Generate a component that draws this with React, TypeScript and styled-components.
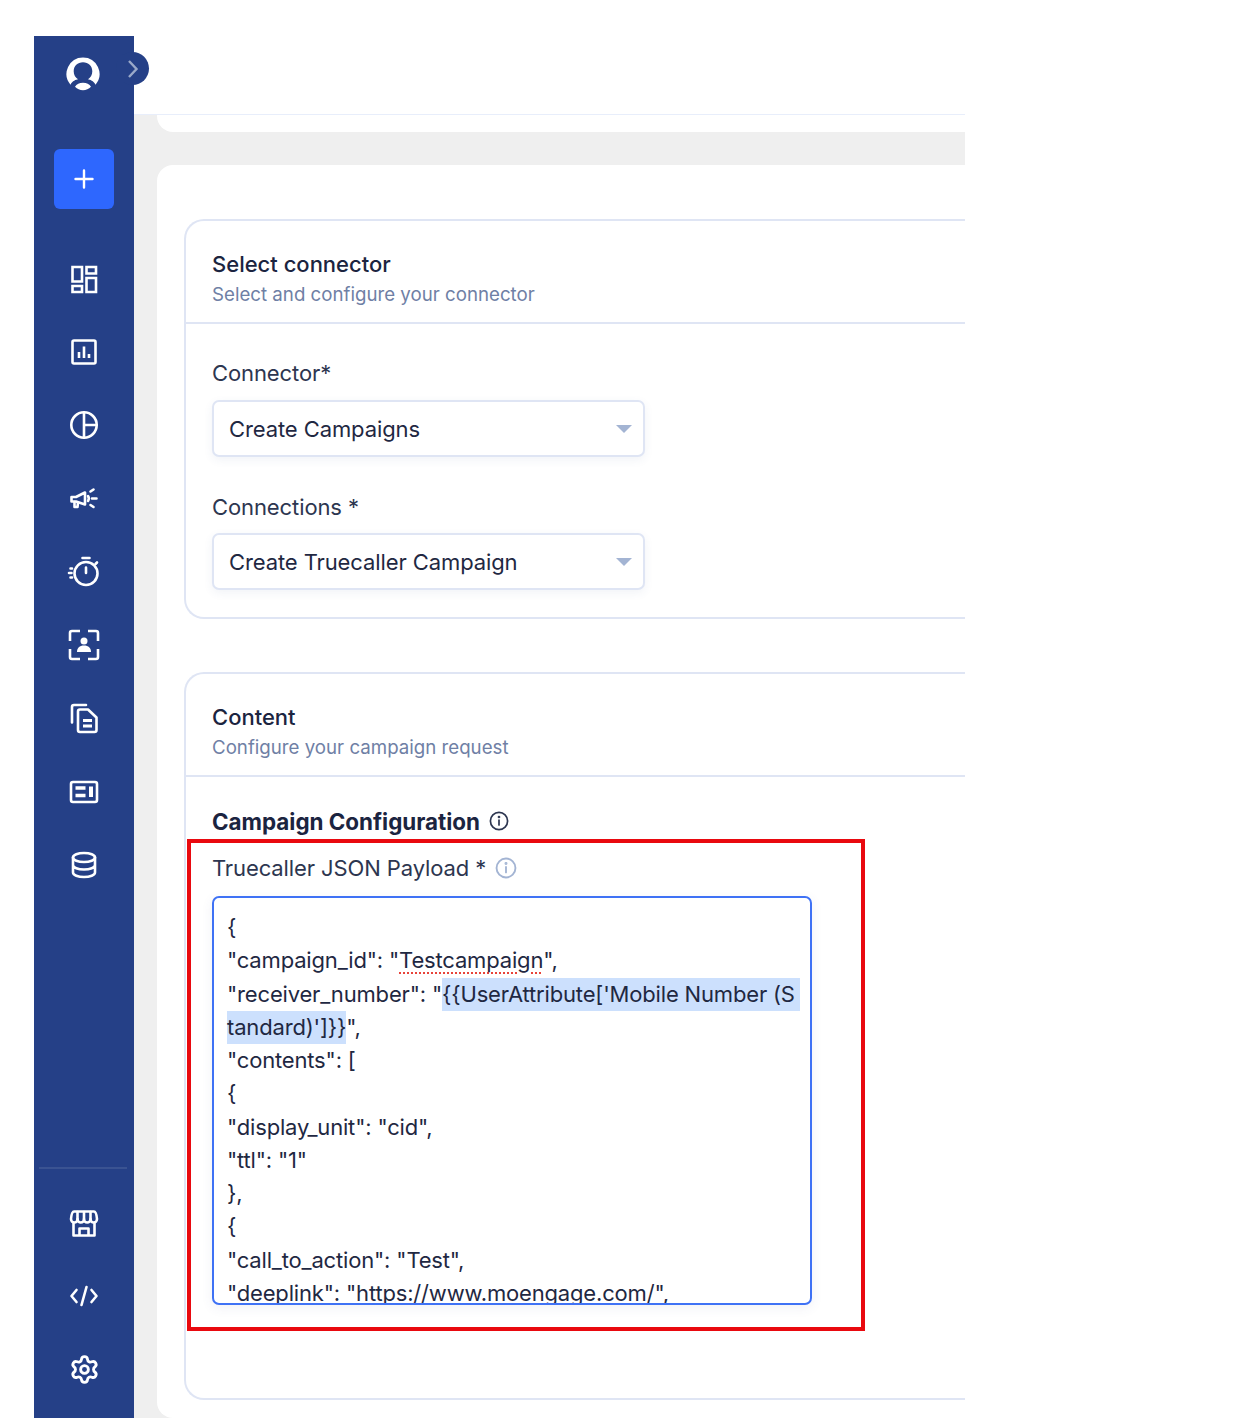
import React from 'react'
import styled, { createGlobalStyle } from 'styled-components'
import { Settings } from 'lucide-react'

const GlobalStyle = createGlobalStyle`
  html, body {
    margin: 0;
    padding: 0;
    background: #fff;
  }
  * {
    box-sizing: border-box;
  }
`

const Page = styled.div`
  padding: 36px 0 4px 34px;
  font-family: Inter, 'Noto Sans', sans-serif;
  color: #1b2440;
`
const Frame = styled.div`
  position: relative;
  display: flex;
  width: 931px;
  height: 1382px;
  overflow: hidden;
`
const Sidebar = styled.aside`
  flex: 0 0 100px;
  display: flex;
  flex-direction: column;
  align-items: center;
  background: #254087;
`
const AvatarSlot = styled.div`
  height: 74px;
  width: 100%;
  padding: 21px 0 0 0;
  display: flex;
  justify-content: center;
  transform: translateX(-1px);
`
const AddButton = styled.button`
  margin-top: 39px;
  width: 60px;
  height: 60px;
  flex: none;
  display: flex;
  align-items: center;
  justify-content: center;
  border: 0;
  padding: 0;
  border-radius: 6px;
  background: #2e67fe;
`
const NavList = styled.nav`
  margin-top: 33px;
  width: 100%;
`
const NavBottom = styled.nav`
  margin-top: auto;
  padding-bottom: 12px;
  width: 100%;
  display: flex;
  flex-direction: column;
  align-items: center;
`
const Divider = styled.div`
  width: 88px;
  height: 2px;
  margin: 0 2px 17px 0;
  background: #3a5392;
`
const NavItem = styled.div`
  height: 73.3px;
  width: 100%;
  display: flex;
  align-items: center;
  justify-content: center;
  color: #fff;
`
const ExpandToggle = styled.button`
  position: absolute;
  left: 82px;
  top: 16px;
  width: 33px;
  height: 33px;
  padding: 0;
  border: 0;
  border-radius: 50%;
  background: #254087;
  display: flex;
  align-items: center;
  justify-content: center;
`
const Main = styled.main`
  flex: 1;
  min-width: 0;
  display: flex;
  flex-direction: column;
  background: #efefef;
  overflow: hidden;
`
const TopBar = styled.header`
  flex: 0 0 79px;
  background: #fff;
  border-bottom: 1px solid #e8eefb;
`
const TopCard = styled.div`
  flex: 0 0 17px;
  margin-left: 23px;
  width: 900px;
  background: #fff;
  border-radius: 0 0 16px 16px;
`
const Card = styled.div`
  flex: 1;
  margin: 33px 0 0 23px;
  width: 900px;
  padding: 54px 0 0 27px;
  background: #fff;
  border-radius: 16px 16px 0 16px;
`
const Section = styled.section<{ $height: number; $gap?: number }>`
  height: ${p => p.$height}px;
  margin-bottom: ${p => p.$gap ?? 0}px;
  border: 2px solid #dfe5f4;
  border-right: 0;
  border-radius: 20px 0 0 20px;
`
const SectionHead = styled.div`
  height: 103px;
  padding: 27px 0 0 26px;
  border-bottom: 2px solid #dfe5f4;
`
const SectionTitle = styled.div`
  font-size: 22px;
  line-height: 32px;
  font-weight: 500;
`
const SectionSub = styled.div`
  font-size: 18.7px;
  line-height: 30px;
  color: #6f80a5;
`
const SectionBody = styled.div`
  padding: 0 0 0 26px;
`
const FieldLabel = styled.label<{ $top: number }>`
  display: flex;
  align-items: center;
  gap: 9px;
  height: 32px;
  margin-top: ${p => p.$top}px;
  font-size: 22px;
  letter-spacing: -0.1px;
  color: #2d3650;
`
const Select = styled.div<{ $top: number }>`
  width: 433px;
  height: 57px;
  margin-top: ${p => p.$top}px;
  padding: 0 11px 0 15px;
  display: flex;
  align-items: center;
  justify-content: space-between;
  font-size: 22px;
  letter-spacing: -0.1px;
  color: #1f2842;
  background: #fff;
  border: 2px solid #dfe5f4;
  border-radius: 7px;
  box-shadow: 0 3px 10px rgba(60, 80, 140, 0.07);
`
const Caret = styled.span`
  width: 0;
  height: 0;
  border-left: 8.5px solid transparent;
  border-right: 8.5px solid transparent;
  border-top: 8px solid #a3b4d3;
`
const GroupTitle = styled.div`
  display: flex;
  align-items: center;
  gap: 9px;
  height: 32px;
  margin-top: 28px;
  font-size: 22.4px;
  font-weight: 700;
  color: #1b2440;
`
const Editor = styled.div`
  width: 600px;
  height: 409px;
  margin-top: 12px;
  padding: 13px 0 0 13px;
  overflow: hidden;
  font-size: 22px;
  letter-spacing: -0.17px;
  line-height: 33.25px;
  color: #1f2842;
  background: #fff;
  border: 2px solid #3f72f5;
  border-radius: 7px;
  box-shadow: 0 3px 12px rgba(60, 80, 140, 0.08);
`
const CodeLine = styled.div`
  height: 33.25px;
  white-space: pre;
`
const Selected = styled.span<{ $pad?: number }>`
  display: inline-block;
  height: 33.25px;
  padding-right: ${p => p.$pad ?? 0}px;
  background: #cce0fd;
`
const Misspelt = styled.span`
  text-decoration: underline dotted #e8433a 2px;
  text-underline-offset: 4px;
`
const Callout = styled.div`
  position: absolute;
  left: 153px;
  top: 803px;
  width: 678px;
  height: 492px;
  border: 4px solid #e9090f;
  pointer-events: none;
`

const Glyph = ({ size, children, fill }: { size: number; children: React.ReactNode; fill?: boolean }) => (
  <svg
    width={size}
    height={size}
    viewBox={`0 0 ${size} ${size}`}
    fill={fill ? 'currentColor' : 'none'}
    stroke={fill ? 'none' : 'currentColor'}
    strokeWidth={2.6}
    strokeLinecap="round"
    strokeLinejoin="round"
  >
    {children}
  </svg>
)

const InfoIcon = ({ color, size }: { color: string; size: number }) => (
  <svg width={size} height={size} viewBox="0 0 20 20" fill="none" stroke={color} strokeWidth="1.7" strokeLinecap="round">
    <circle cx="10" cy="10" r="8.6" />
    <path d="M10 9v5" />
    <circle cx="10" cy="6" r="0.5" fill={color} />
  </svg>
)

const navIcons = [
  <Glyph size={30} key="dash">
    <path d="M3.500 3h9.500v14.500H3.500zM17.500 3H27v6.500h-9.500zM3.500 22H13v6H3.500zM17.500 14H27v14h-9.500z" strokeLinejoin="miter" />
  </Glyph>,
  <Glyph size={30} key="report">
    <rect x="3.500" y="3.500" width="23" height="23" rx="1.500" />
    <path d="M10 21v-6M15 21V9.500M20 21v-4" strokeLinecap="butt" />
  </Glyph>,
  <Glyph size={30} key="pie">
    <circle cx="15" cy="15" r="12.700" />
    <path d="M15 2.500v25M15 15h12.500" />
  </Glyph>,
  <Glyph size={30} key="megaphone">
    <path d="M2.500 13h4.500l9-4.500v12L7 17.500H2.500z" />
    <path d="M5.500 18v5h3l.500-4.500M19 12c1 1.500 1 3.500 0 5" />
    <path d="M21.500 7.500l3-2M23 14.500h4.500M21.500 21l3 2" />
  </Glyph>,
  <Glyph size={34} key="timer">
    <circle cx="19" cy="18.500" r="11.500" />
    <path d="M15.500 3h7M19 12.500v5.500M28.500 9l1.500-1.500M3.500 13.500h1.500M2 18h2.500M3.500 22.500h1.500" />
  </Glyph>,
  <Glyph size={32} key="contact">
    <path d="M2 12V4a2 2 0 0 1 2-2h8M20 2h8a2 2 0 0 1 2 2v8M30 20v8a2 2 0 0 1-2 2h-8M12 30H4a2 2 0 0 1-2-2v-8" strokeLinecap="butt" />
    <circle cx="16" cy="12" r="3.500" fill="currentColor" stroke="none" />
    <path d="M9 23c0-4 2.500-6.500 7-6.500s7 2.500 7 6.500z" fill="currentColor" stroke="none" />
  </Glyph>,
  <Glyph size={32} key="docs">
    <path d="M4 20.500V5a2 2 0 0 1 2-2h12" />
    <path d="M10 9.500a2 2 0 0 1 2-2h8l8.500 8V28a2 2 0 0 1-2 2H12a2 2 0 0 1-2-2z" />
    <path d="M15 18.500h9M15 24h9" strokeLinecap="butt" strokeWidth="2.800" />
  </Glyph>,
  <Glyph size={30} key="news">
    <rect x="2" y="5" width="26" height="20" rx="2" />
    <path d="M6.500 11h10M6.500 18.500h10" strokeWidth="3.600" strokeLinecap="butt" />
    <path d="M22 9.500v10.500" strokeWidth="4" strokeLinecap="butt" />
  </Glyph>,
  <Glyph size={30} key="db">
    <ellipse cx="15" cy="7.500" rx="11" ry="4.500" />
    <path d="M4 7.500v15c0 2.500 5 4.500 11 4.500s11-2 11-4.500v-15M4 15c0 2.500 5 4.500 11 4.500S26 17.500 26 15" />
  </Glyph>
]

const bottomIcons = [
  <Glyph size={32} key="store">
    <path d="M6 4.500h20c1.500 0 2.500 2 3 7.500 0 2-1.500 3.500-3.300 3.500s-3.200-1.500-3.200-3.500c0 2-1.500 3.500-3.300 3.500S16 14 16 12c0 2-1.400 3.500-3.200 3.500S9.500 14 9.500 12c0 2-1.400 3.500-3.200 3.500S3 14 3 12c.5-5.500 1.500-7.500 3-7.500z" />
    <path d="M9.500 5v7M16 5v7M22.500 5v7" />
    <path d="M5.500 16.500V28.500h21V16.500M11.500 28v-6.500h9V28" />
  </Glyph>,
  <Glyph size={32} key="code">
    <path d="M8.500 10L3.500 16l5 6M23.500 10l5 6-5 6M18.500 7l-5 18" />
  </Glyph>,
  <Settings key="settings" size={31} strokeWidth={2.2} />
]

const App = () => (
  <Page>
    <GlobalStyle />
    <Frame>
      <Sidebar>
        <AvatarSlot>
          <svg width="34" height="34" viewBox="0 0 34 34">
            <path
              fillRule="evenodd"
              fill="#fff"
              d="M17 .5a16.500 16.500 0 0 1 12.500 27.200c-1.800-3.700-5.700-5.200-7.500-5.400 2.700-1.700 4.300-4.700 4.300-8.100 0-5.200-3.900-8.900-9.300-8.900s-9.300 3.700-9.300 8.900c0 3.400 1.600 6.400 4.300 8.100-1.800.2-5.700 1.700-7.500 5.400A16.500 16.500 0 0 1 17 .5zM9 29.800c1.500-2.400 4.500-4 8-4s6.500 1.600 8 4c-2.300 2.300-4.800 3.500-8 3.500s-5.700-1.200-8-3.500z"
            />
          </svg>
        </AvatarSlot>
        <AddButton aria-label="Add">
          <svg width="24" height="24" viewBox="0 0 24 24" stroke="#fff" strokeWidth="2.400" strokeLinecap="round">
            <path d="M12 3.500v17M3.500 12h17" />
          </svg>
        </AddButton>
        <NavList>
          {navIcons.map((icon, i) => (
            <NavItem key={i}>{icon}</NavItem>
          ))}
        </NavList>
        <NavBottom>
          <Divider />
          {bottomIcons.map((icon, i) => (
            <NavItem key={i}>{icon}</NavItem>
          ))}
        </NavBottom>
      </Sidebar>
      <ExpandToggle aria-label="Expand">
        <svg width="14" height="20" viewBox="0 0 14 20" fill="none" stroke="#9aa9c9" strokeWidth="2.400">
          <path d="M3 2l7.500 8L3 18" />
        </svg>
      </ExpandToggle>
      <Main>
        <TopBar />
        <TopCard />
        <Card>
          <Section $height={400} $gap={53}>
            <SectionHead>
              <SectionTitle>Select connector</SectionTitle>
              <SectionSub>Select and configure your connector</SectionSub>
            </SectionHead>
            <SectionBody>
              <FieldLabel $top={33}>Connector*</FieldLabel>
              <Select $top={11}>
                Create Campaigns
                <Caret />
              </Select>
              <FieldLabel $top={34}>Connections *</FieldLabel>
              <Select $top={10}>
                Create Truecaller Campaign
                <Caret />
              </Select>
            </SectionBody>
          </Section>
          <Section $height={728}>
            <SectionHead>
              <SectionTitle>Content</SectionTitle>
              <SectionSub>Configure your campaign request</SectionSub>
            </SectionHead>
            <SectionBody>
              <GroupTitle>
                Campaign Configuration
                <InfoIcon color="#2d3650" size={20} />
              </GroupTitle>
              <FieldLabel $top={15}>
                Truecaller JSON Payload *
                <InfoIcon color="#a3b4d3" size={22} />
              </FieldLabel>
              <Editor>
                <CodeLine>{'{'}</CodeLine>
                <CodeLine>
                  {'"campaign_id": "'}
                  <Misspelt>Testcampaign</Misspelt>
                  {'",'}
                </CodeLine>
                <CodeLine>
                  {'"receiver_number": "'}
                  <Selected $pad={5}>{"{{UserAttribute['Mobile Number (S"}</Selected>
                </CodeLine>
                <CodeLine>
                  <Selected>{"tandard)']}}"}</Selected>
                  {'",'}
                </CodeLine>
                <CodeLine>{'"contents": ['}</CodeLine>
                <CodeLine>{'{'}</CodeLine>
                <CodeLine>{'"display_unit": "cid",'}</CodeLine>
                <CodeLine>{'"ttl": "1"'}</CodeLine>
                <CodeLine>{'},'}</CodeLine>
                <CodeLine>{'{'}</CodeLine>
                <CodeLine>{'"call_to_action": "Test",'}</CodeLine>
                <CodeLine>{'"deeplink": "https://www.moengage.com/",'}</CodeLine>
              </Editor>
            </SectionBody>
          </Section>
        </Card>
      </Main>
      <Callout />
    </Frame>
  </Page>
)

export default App
